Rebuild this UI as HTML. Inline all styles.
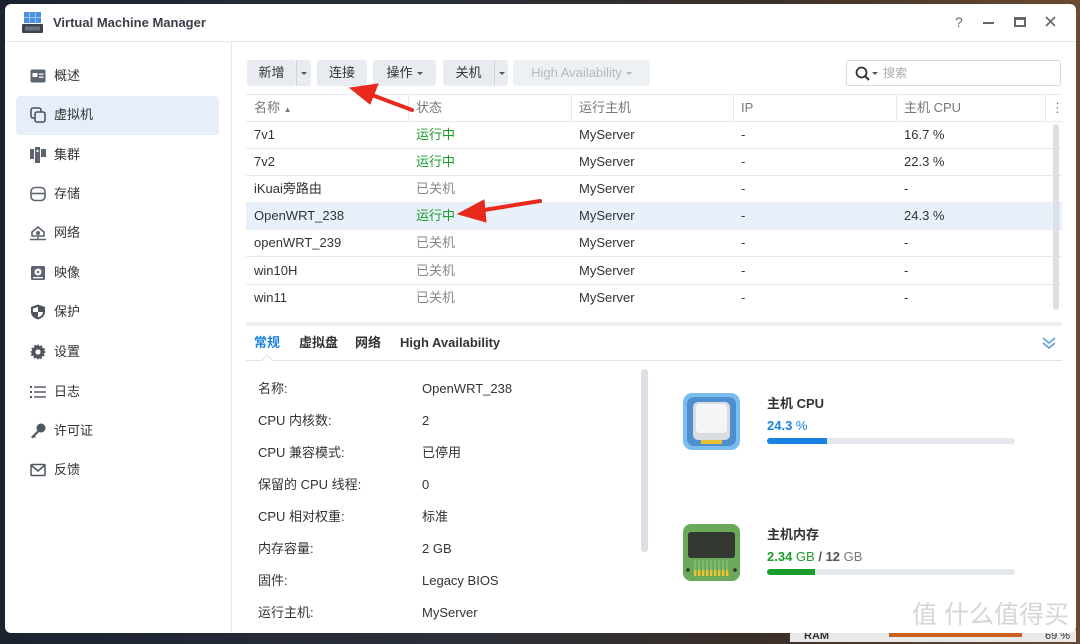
<!DOCTYPE html>
<html><head><meta charset="utf-8">
<style>
*{margin:0;padding:0;box-sizing:border-box}
body{width:1080px;height:642px;overflow:hidden;background:linear-gradient(90deg,#1b2230,#2a2f3a 40%,#3a2f28 70%,#6b4a30);font-family:"Liberation Sans","Noto Sans CJK SC",sans-serif;color:#333;font-size:13px;position:relative}
.abs{position:absolute}
.win{position:absolute;left:5px;top:4px;width:1071px;height:629px;background:#fff;border-radius:6px;overflow:hidden}
.t{position:absolute;white-space:nowrap;line-height:16px;height:16px}
.btn{position:absolute;top:60px;height:26px;background:#e8ecf0;border-radius:3px;font-size:13px;color:#333;line-height:26px;text-align:center}
.car{display:inline-block;width:0;height:0;border-left:3px solid transparent;border-right:3px solid transparent;border-top:3px solid #555;vertical-align:middle;margin-left:4px}
.row{position:absolute;left:246px;width:816px;height:27px;border-bottom:1px solid #e6e9ed}
.row span{position:absolute;top:5px;font-size:13px;white-space:nowrap;line-height:16px;height:16px;display:block}
.g{color:#1a9d2a}.o{color:#888}
.side{position:absolute;left:54px;font-size:13px;color:#333}
.ic{position:absolute;left:30px;width:16px;height:16px}
.lab{position:absolute;left:258px;font-size:13px;color:#333}
.val{position:absolute;left:422px;font-size:13px;color:#333}
</style></head><body>
<div class="abs" style="left:790px;top:630px;width:286px;height:12px;background:#e9e9e9"></div>
<div class="t" style="left:804px;top:628px;font-size:11px;font-weight:bold;color:#333">RAM</div>
<div class="abs" style="left:889px;top:632px;width:133px;height:5px;background:#c8621e"></div>
<div class="t" style="left:1045px;top:628px;font-size:11px;color:#333">69 %</div>

<div class="win">
<svg class="abs" style="left:17px;top:8px" width="21" height="21" viewBox="0 0 21 21"><rect x="2" y="0" width="17" height="11" fill="#4a8fe0"/><path d="M7.6 0v11M13.3 0v11M2 5.5h17" stroke="#9cc8f5" stroke-width="1"/><rect x="0" y="12" width="21" height="9" rx="1" fill="#3c4350"/><rect x="3" y="14.5" width="15" height="4" fill="#6b7380"/></svg>
<div class="t" style="left:48px;top:11px;font-weight:bold;font-size:13px;color:#3a3f47">Virtual Machine Manager</div>
<div class="t" style="left:950px;top:10px;font-size:14px;color:#666">?</div>
<div class="abs" style="left:978px;top:18px;width:11px;height:2px;background:#666"></div>
<div class="abs" style="left:1009px;top:13px;width:12px;height:10px;border:2px solid #666;border-top-width:3px"></div>
<svg class="abs" style="left:1040px;top:12px" width="11" height="11"><path d="M1 1L10 10M10 1L1 10" stroke="#666" stroke-width="1.6"/></svg>
<div class="abs" style="left:0;top:37px;width:1071px;height:1px;background:#e6e9ed"></div>
<div class="abs" style="left:226px;top:37px;width:1px;height:600px;background:#e6e9ed"></div>
<div class="abs" style="left:11px;top:92px;width:203px;height:39px;background:#e5eef9;border-radius:4px"></div>
</div>
<svg class="ic" style="top:68px" viewBox="0 0 16 16"><rect x="0.5" y="1.5" width="15" height="13" rx="1.5" fill="#5b6470"/><rect x="2.5" y="5" width="5" height="4" fill="#fff"/><rect x="9" y="5.5" width="4.5" height="1.3" fill="#fff"/><rect x="9" y="8.5" width="4.5" height="1.3" fill="#fff"/></svg>
<div class="side t" style="top:68px">概述</div>
<svg class="ic" style="top:107px" viewBox="0 0 16 16"><rect x="1" y="1" width="10" height="10" rx="2" fill="none" stroke="#4c5560" stroke-width="1.6"/><rect x="5" y="5" width="10" height="10" rx="2" fill="#e5eef9" stroke="#4c5560" stroke-width="1.6"/></svg>
<div class="side t" style="top:107px">虚拟机</div>
<svg class="ic" style="top:147px" viewBox="0 0 16 16"><rect x="0" y="2" width="4" height="10" fill="#5b6470"/><rect x="5" y="0" width="5" height="16" fill="#5b6470"/><rect x="11" y="2" width="5" height="8" fill="#5b6470"/><rect x="6.5" y="3" width="2" height="2" fill="#fff"/></svg>
<div class="side t" style="top:147px">集群</div>
<svg class="ic" style="top:186px" viewBox="0 0 16 16"><rect x="1" y="1.5" width="14" height="13" rx="4" fill="none" stroke="#5b6470" stroke-width="1.6"/><path d="M1 7.5h14" stroke="#5b6470" stroke-width="1.6"/></svg>
<div class="side t" style="top:186px">存储</div>
<svg class="ic" style="top:225px" viewBox="0 0 16 16"><path d="M2 7L8 2L14 7V11H2Z" fill="none" stroke="#5b6470" stroke-width="1.6"/><circle cx="8" cy="8" r="2" fill="#5b6470"/><path d="M0 14.5h16M8 11v3.5" stroke="#5b6470" stroke-width="1.4"/></svg>
<div class="side t" style="top:225px">网络</div>
<svg class="ic" style="top:265px" viewBox="0 0 16 16"><rect x="1" y="1" width="14" height="14" rx="1.5" fill="#5b6470"/><circle cx="8" cy="7" r="3.5" fill="#fff"/><circle cx="8" cy="7" r="1.2" fill="#5b6470"/><rect x="3" y="12" width="10" height="1.3" fill="#fff"/></svg>
<div class="side t" style="top:265px">映像</div>
<svg class="ic" style="top:304px" viewBox="0 0 16 16"><path d="M8 0.5L15 3V8C15 12 11.5 14.5 8 15.5C4.5 14.5 1 12 1 8V3Z" fill="#4c5560"/><path d="M8 3V8H13C13 10.5 11 12.5 8 13.4V8H3V4.5Z" fill="#fff"/></svg>
<div class="side t" style="top:304px">保护</div>
<svg class="ic" style="top:344px" viewBox="0 0 16 16"><path d="M8 0l1.5 2.3 2.6-1 .3 2.8 2.8.3-1 2.6L16 8l-2.3 1.5 1 2.6-2.8.3-.3 2.8-2.6-1L8 16l-1.5-2.3-2.6 1-.3-2.8-2.8-.3 1-2.6L0 8l2.3-1.5-1-2.6 2.8-.3.3-2.8 2.6 1z" fill="#4c5560"/><circle cx="8" cy="8" r="2.6" fill="#fff"/></svg>
<div class="side t" style="top:344px">设置</div>
<svg class="ic" style="top:384px" viewBox="0 0 16 16"><g fill="#4c5560"><rect x="0" y="2" width="2" height="2"/><rect x="0" y="7" width="2" height="2"/><rect x="0" y="12" width="2" height="2"/><rect x="4" y="2.3" width="12" height="1.4"/><rect x="4" y="7.3" width="12" height="1.4"/><rect x="4" y="12.3" width="12" height="1.4"/></g></svg>
<div class="side t" style="top:384px">日志</div>
<svg class="ic" style="top:423px" viewBox="0 0 16 16"><circle cx="11" cy="5" r="4.5" fill="#4c5560"/><path d="M8 7L1 14L2.5 15.5L4 14L5 15L6 14L5 13L9.5 8.5Z" fill="#4c5560"/></svg>
<div class="side t" style="top:423px">许可证</div>
<svg class="ic" style="top:462px" viewBox="0 0 16 16"><rect x="1" y="2.5" width="14" height="11" rx="1" fill="none" stroke="#4c5560" stroke-width="1.5"/><path d="M1.5 3.5L8 9L14.5 3.5" fill="none" stroke="#4c5560" stroke-width="1.5"/></svg>
<div class="side t" style="top:462px">反馈</div>

<div class="btn" style="left:247px;width:49px">新增</div>
<div class="btn" style="left:296px;width:15px;border-left:1px solid #d0d5db;border-radius:0 3px 3px 0"><span class="car" style="margin:0"></span></div>
<div class="btn" style="left:317px;width:50px">连接</div>
<div class="btn" style="left:373px;width:63px">操作<span class="car"></span></div>
<div class="btn" style="left:443px;width:51px">关机</div>
<div class="btn" style="left:494px;width:14px;border-left:1px solid #d0d5db;border-radius:0 3px 3px 0"><span class="car" style="margin:0"></span></div>
<div class="btn" style="left:513px;width:137px;color:#b4b9c0;background:#eef1f4">High Availability<span class="car" style="border-top-color:#b4b9c0"></span></div>
<div class="abs" style="left:846px;top:60px;width:215px;height:26px;border:1px solid #d5dbe2;border-radius:3px"></div>
<svg class="abs" style="left:855px;top:66px" width="16" height="16"><circle cx="6.5" cy="6.5" r="5" fill="none" stroke="#333" stroke-width="1.8"/><path d="M10 10L14 14" stroke="#333" stroke-width="2"/></svg>
<span class="car abs" style="left:868px;top:72px"></span>
<div class="t" style="left:883px;top:65px;color:#aaa;font-size:12px">搜索</div>

<div class="abs" style="left:246px;top:94px;width:816px;height:28px;border-top:1px solid #e6e9ed;border-bottom:1px solid #e6e9ed"></div>
<div class="abs" style="left:408px;top:95px;width:1px;height:27px;background:#e6e9ed"></div>
<div class="abs" style="left:571px;top:95px;width:1px;height:27px;background:#e6e9ed"></div>
<div class="abs" style="left:733px;top:95px;width:1px;height:27px;background:#e6e9ed"></div>
<div class="abs" style="left:896px;top:95px;width:1px;height:27px;background:#e6e9ed"></div>
<div class="abs" style="left:1045px;top:95px;width:1px;height:27px;background:#e6e9ed"></div>
<div class="t" style="left:254px;top:100px;color:#777">名称 <span style="font-size:8px">▲</span></div>
<div class="t" style="left:416px;top:100px;color:#777">状态</div>
<div class="t" style="left:579px;top:100px;color:#777">运行主机</div>
<div class="t" style="left:741px;top:100px;color:#777">IP</div>
<div class="t" style="left:904px;top:100px;color:#777">主机 CPU</div>
<div class="t" style="left:1051px;top:100px;color:#777">⋮</div>

<div class="row" style="top:122px"><span style="left:8px">7v1</span><span class="g" style="left:170px">运行中</span><span style="left:333px">MyServer</span><span style="left:495px">-</span><span style="left:658px">16.7 %</span></div>
<div class="row" style="top:149px"><span style="left:8px">7v2</span><span class="g" style="left:170px">运行中</span><span style="left:333px">MyServer</span><span style="left:495px">-</span><span style="left:658px">22.3 %</span></div>
<div class="row" style="top:176px"><span style="left:8px">iKuai旁路由</span><span class="o" style="left:170px">已关机</span><span style="left:333px">MyServer</span><span style="left:495px">-</span><span style="left:658px">-</span></div>
<div class="row" style="top:203px;background:#e8f0fa"><span style="left:8px">OpenWRT_238</span><span class="g" style="left:170px">运行中</span><span style="left:333px">MyServer</span><span style="left:495px">-</span><span style="left:658px">24.3 %</span></div>
<div class="row" style="top:230px"><span style="left:8px">openWRT_239</span><span class="o" style="left:170px">已关机</span><span style="left:333px">MyServer</span><span style="left:495px">-</span><span style="left:658px">-</span></div>
<div class="row" style="top:258px"><span style="left:8px">win10H</span><span class="o" style="left:170px">已关机</span><span style="left:333px">MyServer</span><span style="left:495px">-</span><span style="left:658px">-</span></div>
<div class="row" style="top:285px;border-bottom:none"><span style="left:8px">win11</span><span class="o" style="left:170px">已关机</span><span style="left:333px">MyServer</span><span style="left:495px">-</span><span style="left:658px">-</span></div>
<div class="abs" style="left:1053px;top:124px;width:6px;height:186px;background:#dcdfe3;border-radius:3px"></div>

<div class="abs" style="left:246px;top:322px;width:816px;height:4px;background:#edf0f3"></div>
<div class="t" style="left:254px;top:335px;color:#1a82e2;font-weight:bold">常规</div>
<div class="t" style="left:299px;top:335px;font-weight:bold;color:#333">虚拟盘</div>
<div class="t" style="left:355px;top:335px;font-weight:bold;color:#333">网络</div>
<div class="t" style="left:400px;top:335px;font-weight:bold;color:#333">High Availability</div>
<div class="abs" style="left:246px;top:360px;width:816px;height:1px;background:#dfe4ea"></div>
<div class="abs" style="left:263px;top:356px;width:8px;height:8px;background:#fff;border-left:1px solid #dfe4ea;border-top:1px solid #dfe4ea;transform:rotate(45deg)"></div>
<svg class="abs" style="left:1042px;top:336px" width="14" height="14"><path d="M1 2L7 7L13 2M1 7L7 12L13 7" fill="none" stroke="#5a9ae0" stroke-width="1.5"/></svg>

<div class="lab t" style="top:381px">名称:</div><div class="val t" style="top:381px">OpenWRT_238</div>
<div class="lab t" style="top:413px">CPU 内核数:</div><div class="val t" style="top:413px">2</div>
<div class="lab t" style="top:445px">CPU 兼容模式:</div><div class="val t" style="top:445px">已停用</div>
<div class="lab t" style="top:477px">保留的 CPU 线程:</div><div class="val t" style="top:477px">0</div>
<div class="lab t" style="top:509px">CPU 相对权重:</div><div class="val t" style="top:509px">标准</div>
<div class="lab t" style="top:541px">内存容量:</div><div class="val t" style="top:541px">2 GB</div>
<div class="lab t" style="top:573px">固件:</div><div class="val t" style="top:573px">Legacy BIOS</div>
<div class="lab t" style="top:605px">运行主机:</div><div class="val t" style="top:605px">MyServer</div>
<div class="abs" style="left:641px;top:369px;width:7px;height:183px;background:#dcdfe3;border-radius:3px"></div>

<svg class="abs" style="left:683px;top:393px" width="57" height="57" viewBox="0 0 57 57"><rect width="57" height="57" rx="9" fill="#7cbdf0"/><rect x="4" y="4" width="49" height="49" rx="7" fill="#4f8fd0"/><rect x="10" y="9" width="37" height="38" rx="5" fill="#d9dde2"/><rect x="13" y="11" width="31" height="29" rx="4" fill="#f4f5f7"/><rect x="18" y="47" width="21" height="4" fill="#e8c230"/></svg>
<div class="t" style="left:767px;top:396px;font-weight:bold;color:#333">主机 CPU</div>
<div class="t" style="left:767px;top:418px;font-weight:bold;color:#1a82e2">24.3 <span style="font-weight:normal">%</span></div>
<div class="abs" style="left:767px;top:438px;width:248px;height:6px;background:#e4e7eb;border-radius:3px"></div>
<div class="abs" style="left:767px;top:438px;width:60px;height:6px;background:#1a82e2;border-radius:3px 0 0 3px"></div>

<svg class="abs" style="left:683px;top:524px" width="57" height="57" viewBox="0 0 57 57"><rect width="57" height="57" rx="8" fill="#6aa85a"/><rect x="5" y="8" width="47" height="26" rx="3" fill="#333833"/><g stroke="#a8cf98" stroke-width="0.8"><path d="M12 36v11M16 36v11M20 36v11M24 36v11M28 36v11M32 36v11M36 36v11M40 36v11M44 36v11"/></g><g fill="#f2c12e"><rect x="11" y="46" width="2.4" height="6"/><rect x="15" y="46" width="2.4" height="6"/><rect x="19" y="46" width="2.4" height="6"/><rect x="23" y="46" width="2.4" height="6"/><rect x="27" y="46" width="2.4" height="6"/><rect x="31" y="46" width="2.4" height="6"/><rect x="35" y="46" width="2.4" height="6"/><rect x="39" y="46" width="2.4" height="6"/><rect x="43" y="46" width="2.4" height="6"/></g><circle cx="5" cy="46" r="1.8" fill="#333"/><circle cx="52" cy="46" r="1.8" fill="#333"/></svg>
<div class="t" style="left:767px;top:527px;font-weight:bold;color:#333">主机内存</div>
<div class="t" style="left:767px;top:549px;font-weight:bold;color:#1a9d2a">2.34<span style="font-weight:normal"> GB</span> <span style="color:#555">/ 12</span><span style="color:#777;font-weight:normal"> GB</span></div>
<div class="abs" style="left:767px;top:569px;width:248px;height:6px;background:#e4e7eb;border-radius:3px"></div>
<div class="abs" style="left:767px;top:569px;width:48px;height:6px;background:#1a9d2a;border-radius:3px 0 0 3px"></div>

<div class="abs" style="left:912px;top:600px;font-size:25px;line-height:30px;color:#d5d5d5;letter-spacing:0px;white-space:nowrap">值 什么值得买</div>

<svg class="abs" style="left:0;top:0" width="1080" height="642"><g fill="#e8291c" stroke="#e8291c"><path d="M412 110L372 95" stroke-width="4" stroke-linecap="round"/><path d="M350 88L378 84L370 104Z"/><path d="M540 201L478 211" stroke-width="4" stroke-linecap="round"/><path d="M458 214L484 200L486 222Z"/></g></svg>
</body></html>
